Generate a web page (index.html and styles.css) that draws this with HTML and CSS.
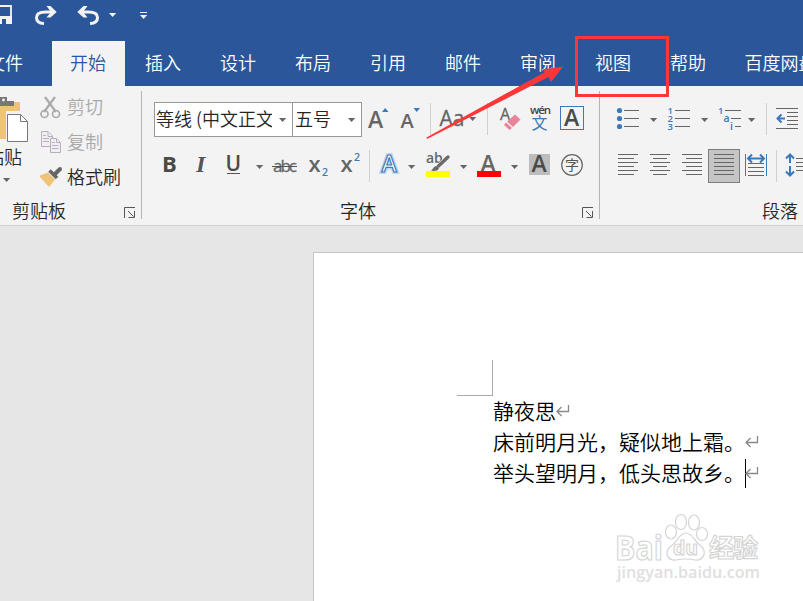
FILE: index.html
```
<!DOCTYPE html>
<html lang="zh-CN">
<head>
  <meta charset="UTF-8">
  <title>Word</title>
  <link rel="stylesheet" href="styles.css">
</head>
<body>
  <header class="titlebar">
    <svg class="w30" height="41" viewBox="0 0 30 41"><path d="M-6 6H11V17" fill="none" stroke="#f3f3f3" stroke-width="1.800"/><path d="M-6 16H12V24H6V19H2V24H-6Z" fill="#f3f3f3"/></svg>
    <svg class="w40" height="41" viewBox="0 0 40 41"><path d="M24 12H15.500C9 12 6.500 14.500 6.500 17.500C6.500 21 9 23.300 14 23.500" fill="none" stroke="#f3f3f3" stroke-width="3"/><path d="M16.500 6H20.500L26.700 12L20.500 17.500H16.500L21 12Z" fill="#f3f3f3"/></svg>
    <svg class="w35" height="41" viewBox="0 0 35 41"><path d="M10 12H18.500C25 12 27.500 14.500 27.500 17.500C27.500 21 25 23.300 20 23.500" fill="none" stroke="#f3f3f3" stroke-width="3"/><path d="M17.500 6H13.500L7.300 12L13.500 17.500H17.500L13 12Z" fill="#f3f3f3"/></svg>
    <svg class="w30" height="41" viewBox="0 0 30 41"><path d="M4 13H11.200L7.600 17Z" fill="#f3f3f3"/></svg>
    <svg class="w30" height="41" viewBox="0 0 30 41"><path d="M5 12H12V13H5ZM5 15H12.200L8.600 19Z" fill="#f3f3f3"/></svg>
  </header>

  <nav class="tabs">
    <span class="tab file">文件</span>
    <span class="tab active">开始</span>
    <span class="tab">插入</span>
    <span class="tab">设计</span>
    <span class="tab">布局</span>
    <span class="tab">引用</span>
    <span class="tab">邮件</span>
    <span class="tab">审阅</span>
    <span class="tab">视图</span>
    <span class="tab">帮助</span>
    <span class="tab last">百度网盘</span>
  </nav>

  <section class="ribbon">
    <div class="group clipboard">
      <div class="clip-body">
        <div class="paste">
          <svg width="36" height="54" viewBox="0 0 36 54">
            <path d="M0 11H20V20H6V48H0Z" fill="#eec37a"/>
            <path d="M0 6H7V10H14V15H0Z" fill="#777"/><circle cx="3.500" cy="9" r="1.400" fill="#f3f3f3"/>
            <path d="M7.500 23.500H20.500L27.500 30.500V50.500H7.500Z" fill="#fff" stroke="#777"/><path d="M20.500 23.500V30.500H27.500" fill="none" stroke="#777"/>
          </svg>
          <span class="paste-text">粘贴</span>
          <svg width="36" height="18" viewBox="0 0 36 18"><path class="arrow" d="M3 9H10.200L6.600 13Z"/></svg>
        </div>
        <div class="clip-list">
          <div class="clip-item off">
            <svg width="27" height="34" viewBox="0 0 27 34"><path d="M5 6L16 21M15 6L4 21" stroke="#aaa" stroke-width="2.200"/><circle cx="4.500" cy="23" r="3.500" fill="none" stroke="#aaa" stroke-width="1.700"/><circle cx="16" cy="23" r="3.500" fill="none" stroke="#aaa" stroke-width="1.700"/></svg>
            <span>剪切</span>
          </div>
          <div class="clip-item off">
            <svg width="27" height="34" viewBox="0 0 27 34"><g fill="#f3eef5" stroke="#b5b0b8"><path d="M1.500 5.500H8L12.500 10V20.500H1.500Z"/><path d="M10.500 12.500H16.500L20.500 16.500V26.500H10.500Z"/><path d="M8 5.500V10.500H12M16.500 12.500V16.500H20M3 9.500H6M3 12.500H9M3 15.500H9M12 16.500H15M12 19.500H18.500M12 22.500H18.500"/></g></svg>
            <span>复制</span>
          </div>
          <div class="clip-item">
            <svg width="27" height="34" viewBox="0 0 27 34"><path d="M-1 15L8 11.500L15 18.500L9 26Z" fill="#eec37a"/><path d="M9.500 9.500L17 17" stroke="#666" stroke-width="3.500"/><path d="M15 13L20 8" stroke="#666" stroke-width="4" stroke-linecap="round"/></svg>
            <span>格式刷</span>
          </div>
        </div>
      </div>
      <div class="group-label">剪贴板</div>
      <svg class="launcher" width="12" height="12" viewBox="0 0 12 12"><path d="M.5 11V.5H11M4 4L9.500 9.500M10.500 4V10.500H4.500" fill="none" stroke="#555"/></svg>
    </div>

    <div class="group font">
      <div class="row first">
        <div class="combo name"><span>等线 (中文正文)</span><svg width="20" height="33" viewBox="0 0 20 33"><path class="arrow" d="M7 15H14.200L10.600 19Z"/></svg></div>
        <div class="combo size"><span>五号</span><svg width="20" height="33" viewBox="0 0 20 33"><path class="arrow" d="M7 15H14.200L10.600 19Z"/></svg></div>
        <svg class="w32" height="35" viewBox="0 0 32 35"><text class="glyph" x="6" y="26" font-size="23">A</text><path d="M20 10H26.500L23.200 6Z" fill="#3d78b8"/></svg>
        <svg class="w32" height="35" viewBox="0 0 32 35"><text class="glyph" x="6.500" y="26" font-size="20">A</text><path d="M19.500 6H26L22.700 10Z" fill="#3d78b8"/></svg>
        <i class="sep s1"></i>
        <svg class="w50" height="35" viewBox="0 0 50 35"><text class="glyph thin" x="3.500" y="24" font-size="21" textLength="25">Aa</text><path class="arrow" d="M33 15H40.200L36.600 19Z"/></svg>
        <i class="sep s2"></i>
        <svg class="w32" height="35" viewBox="0 0 32 35"><text class="glyph thin" x="6" y="18" font-size="16">A</text><path d="M21 12.500L26.500 17.500L19 25L13 19.500Z" fill="#e8849a"/><path d="M12 20.500L18 26L15.500 28L10 23Z" fill="#e8849a"/></svg>
        <svg class="w32" height="35" viewBox="0 0 32 35"><text class="wen" x="5" y="11.500" font-size="11.500" textLength="21">wén</text><text class="cjk blue" x="6.500" y="26.500" font-size="16">文</text></svg>
        <svg class="w32" height="35" viewBox="0 0 32 35"><rect x="4.500" y="4.500" width="23" height="23" fill="none" stroke="#3d78b8"/><text class="glyph dark" x="8" y="24" font-size="23">A</text></svg>
      </div>
      <div class="row second">
        <svg class="w31" height="32" viewBox="0 0 31 32"><text class="glyph dark bold" x="8" y="22" font-size="22">B</text></svg>
        <svg class="w31" height="32" viewBox="0 0 31 32"><text class="serif" x="11" y="22" font-size="24">I</text></svg>
        <svg class="w33" height="32" viewBox="0 0 33 32"><text class="glyph dark" x="9.500" y="21" font-size="21">U</text><path d="M11 23.500H24" stroke="#555"/></svg>
        <svg class="w21" height="32" viewBox="0 0 21 32"><path class="arrow" d="M7 15H14.200L10.600 19Z"/></svg>
        <svg class="w30" height="32" viewBox="0 0 30 32"><text class="glyph thin" x="3" y="22" font-size="17" textLength="24">abc</text><path d="M2 16.500H27" stroke="#555"/></svg>
        <svg class="w34" height="32" viewBox="0 0 34 32"><text class="glyph" x="8.500" y="22" font-size="22">x</text><text class="small" x="22" y="25.500" font-size="10.500">2</text></svg>
        <svg class="w32" height="32" viewBox="0 0 32 32"><text class="glyph" x="6.500" y="22" font-size="22">x</text><text class="small" x="20" y="11" font-size="10.500">2</text></svg>
        <i class="sep s3"></i>
        <svg class="w31" height="32" viewBox="0 0 31 32"><text class="halo" x="7.500" y="22" font-size="23">A</text><text class="outline" x="7.500" y="22" font-size="23">A</text></svg>
        <svg class="w13" height="32" viewBox="0 0 13 32"><path class="arrow" d="M3 15H10.200L6.600 19Z"/></svg>
        <svg class="w38" height="32" viewBox="0 0 38 32"><text class="glyph ab" x="8" y="13" font-size="14">ab</text><path d="M8 21H32V27H8Z" fill="#ff0"/><path d="M19 18L29 8" stroke="#f3f3f3" stroke-width="5"/><path d="M20.500 16L30 7" stroke="#6a6a6a" stroke-width="3.400" stroke-linecap="round"/><path d="M12.500 20.500C15.500 20 15 16 18.500 16L21 18.500C20 21 16 21.500 12.500 20.500Z" fill="#6a6a6a"/></svg>
        <svg class="w14" height="32" viewBox="0 0 14 32"><path class="arrow" d="M4 15H11.200L7.600 19Z"/></svg>
        <svg class="w38" height="32" viewBox="0 0 38 32"><text class="glyph" x="10.500" y="21.500" font-size="23">A</text><path d="M7 21H31V27H7Z" fill="#f00"/></svg>
        <svg class="w13" height="32" viewBox="0 0 13 32"><path class="arrow" d="M3 15H10.200L6.600 19Z"/></svg>
        <svg class="w35" height="32" viewBox="0 0 35 32"><path d="M8 4H29V25H8Z" fill="#bdbdbd"/><text class="glyph dark" x="10.500" y="22" font-size="23">A</text></svg>
        <svg class="w32" height="32" viewBox="0 0 32 32"><circle cx="16" cy="15" r="10.300" fill="none" stroke="#666" stroke-width="1.200"/><text class="cjk" x="9" y="20" font-size="14">字</text></svg>
      </div>
      <div class="group-label">字体</div>
      <svg class="launcher" width="12" height="12" viewBox="0 0 12 12"><path d="M.5 11V.5H11M4 4L9.500 9.500M10.500 4V10.500H4.500" fill="none" stroke="#555"/></svg>
    </div>

    <div class="group para">
      <div class="row first">
        <svg class="w50" height="35" viewBox="0 0 50 35"><g fill="#3d78b8"><circle cx="9.500" cy="8.500" r="2.600"/><circle cx="9.500" cy="16.500" r="2.600"/><circle cx="9.500" cy="24.500" r="2.600"/></g><path class="line" d="M14 8.500H29M14 16.500H29M14 24.500H29"/><path class="arrow" d="M40 16H47.200L43.600 20Z"/></svg>
        <svg class="w50" height="35" viewBox="0 0 50 35"><g class="num"><text x="7.500" y="12">1</text><text x="7.500" y="20">2</text><text x="7.500" y="28">3</text></g><path class="line" d="M15 8.500H30M15 16.500H30M15 24.500H30"/><path class="arrow" d="M41 16H48.200L44.600 20Z"/></svg>
        <svg class="w56" height="35" viewBox="0 0 56 35"><g class="num"><text x="8" y="12">1</text><text x="13.500" y="19.500" class="letter">a</text><text x="20" y="28" class="letter">i</text></g><path class="line" d="M15 8.500H31M21 16.500H31M25 24.500H31"/><path class="arrow" d="M38 16H45.200L41.600 20Z"/></svg>
        <i class="sep s4"></i>
        <svg class="w32" height="35" viewBox="0 0 32 35"><path class="line" d="M4 6.500H26M15 10.500H26M15 14.500H26M15 18.500H26M15 22.500H26M4 26.500H26"/><path class="blue-line" d="M13 16.500H6M9.500 12.500L5.500 16.500L9.500 20.500"/></svg>
      </div>
      <div class="row second">
        <svg class="w32" height="34" viewBox="0 0 32 34"><path class="line" d="M8 5.500H28M8 9.500H24M8 13.500H28M8 17.500H24M8 21.500H28M8 25.500H24"/></svg>
        <svg class="w32" height="34" viewBox="0 0 32 34"><path class="line" d="M8 5.500H28M11 9.500H25M8 13.500H28M11 17.500H25M8 21.500H28M11 25.500H25"/></svg>
        <svg class="w34" height="34" viewBox="0 0 34 34"><path class="line" d="M8 5.500H28M12 9.500H28M8 13.500H28M12 17.500H28M8 21.500H28M12 25.500H28"/></svg>
        <div class="pressed"><svg width="30" height="32" viewBox="0 0 30 32"><path class="line" d="M5 4.500H25M5 8.500H25M5 12.500H25M5 16.500H25M5 20.500H25M5 24.500H25"/></svg></div>
        <svg class="w36" height="34" viewBox="0 0 36 34"><path d="M5.500 5V27M26.500 5V27" stroke="#3d78b8"/><path class="blue-line" d="M9 9.500H23M12 5.500L8 9.500L12 13.500M20 5.500L24 9.500L20 13.500"/><path class="line" d="M8 14.500H24M8 18.500H24M8 22.500H24M8 26.500H24"/></svg>
        <i class="sep s5"></i>
        <svg class="w32" height="34" viewBox="0 0 32 34"><path class="blue-line" d="M9 6V14M5 9.500L9 5.500L13 9.500M9 17V26M5 22.500L9 26.500L13 22.500"/><path class="line" d="M15 9.500H32M15 13.500H32M15 17.500H32M15 21.500H32"/></svg>
      </div>
      <div class="group-label">段落</div>
    </div>
  </section>

  <main class="workspace">
    <article class="page">
      <div class="corner"></div>
      <p>静夜思<svg class="mark" width="14" height="14" viewBox="0 0 14 14"><path d="M12.500 1V7.500H1.500M5.500 3L1 7.500L5.500 12"/></svg></p>
      <p>床前明月光，疑似地上霜。<svg class="mark" width="14" height="14" viewBox="0 0 14 14"><path d="M12.500 1V7.500H1.500M5.500 3L1 7.500L5.500 12"/></svg></p>
      <p>举头望明月，低头思故乡。<i class="caret"></i><svg class="mark" width="14" height="14" viewBox="0 0 14 14"><path d="M12.500 1V7.500H1.500M5.500 3L1 7.500L5.500 12"/></svg></p>
    </article>
  </main>

  <svg class="watermark" width="160" height="80" viewBox="0 0 160 80">
    <text class="wm-logo" x="3" y="49.500" font-size="34" textLength="48" lengthAdjust="spacingAndGlyphs">Bai</text>
    <g class="wm-paw"><ellipse cx="59" cy="22" rx="5.500" ry="7"/><ellipse cx="69" cy="12" rx="5.500" ry="7.500"/><ellipse cx="82" cy="12.500" rx="5.500" ry="7.500"/><ellipse cx="90" cy="24" rx="5.500" ry="6.500"/><path d="M74 23C67 23 66 32 58 37C52 43 56 51 64 50Q74 48 83 50C91 51 95 43 90 37C82 32 81 23 74 23Z"/></g>
    <text class="wm-logo" x="61" y="45" font-size="20" textLength="25" lengthAdjust="spacingAndGlyphs">du</text>
    <text class="wm-cn" x="97" y="47" font-size="25" textLength="49">经验</text>
    <text class="wm-url" x="5" y="68" font-size="16" textLength="143" lengthAdjust="spacingAndGlyphs">jingyan.baidu.com</text>
  </svg>

  <!-- red box and arrow pointing at the view tab -->
  <svg class="callout" width="260" height="120" viewBox="0 0 260 120">
    <rect x="156.500" y="7.500" width="91" height="58" fill="none" stroke="#fd3638" stroke-width="3"/>
    <path d="M6.500 107.500L125 42L122.500 39.200L143 36.700L131 52L128.500 47L7 109Z" fill="#fd3638"/>
  </svg>
</body>
</html>
```
FILE: styles.css
```
* {
  box-sizing: border-box;
}

body {
  margin: 0;
  width: 803px;
  height: 601px;
  overflow: hidden;
  display: flex;
  flex-direction: column;
  position: relative;
  background: #e6e6e6;
  color: #262626;
  font: 350 18px/24px "Noto Sans CJK SC", sans-serif;
}

svg {
  display: block;
  flex: none;
}

/* title bar */
.titlebar {
  display: flex;
  height: 41px;
  background: #2b579a;
}

.w13 { width: 13px; }
.w14 { width: 14px; }
.w21 { width: 21px; }
.w30 { width: 30px; }
.w31 { width: 31px; }
.w32 { width: 32px; }
.w33 { width: 33px; }
.w34 { width: 34px; }
.w35 { width: 35px; }
.w36 { width: 36px; }
.w38 { width: 38px; }
.w40 { width: 40px; }
.w50 { width: 50px; }
.w56 { width: 56px; }

/* tabs */
.tabs {
  display: flex;
  height: 45px;
  background: #2b579a;
  color: #fff;
  overflow: hidden;
}

.tab {
  flex: none;
  width: 73px;
  margin: 0 1px;
  padding-right: 1px;
  line-height: 42px;
  text-align: center;
}

.tab.file {
  margin: 0 9px 0 -31px;
}

.tab.active {
  background: #f3f3f3;
  color: #2b579a;
}

.tab.last {
  width: 108px;
}

/* ribbon */
.ribbon {
  display: flex;
  height: 140px;
  padding: 5px 0 6px;
  background: #f3f3f3;
  border-bottom: 1px solid #d2d2d2;
  overflow: hidden;
}

.group {
  position: relative;
  flex: none;
  height: 128px;
  border-right: 1px solid #b4b4b4;
}

.clipboard { width: 142px; }
.font { width: 458px; padding-left: 12px; }
.para { width: 240px; padding-left: 10px; border: none; }

.clip-body {
  display: flex;
  height: 108px;
}

.paste {
  width: 40px;
}

.paste-text {
  display: block;
  height: 24px;
  margin-left: -14px;
  line-height: 23px;
  white-space: nowrap;
}

.clip-item {
  display: flex;
  height: 35px;
  line-height: 31px;
}

.off {
  color: #a9a9a9;
}

.group-label {
  line-height: 23px;
  text-align: center;
}

.clipboard .group-label {
  padding-right: 63px;
}

.font .group-label {
  padding-right: 37px;
}

.para .group-label {
  padding-left: 130px;
  padding-right: 20px;
}

.launcher {
  position: absolute;
  right: 5px;
  bottom: 0;
}

.row {
  display: flex;
}

.row.first {
  height: 46px;
  margin-top: 11px;
}

.row.second {
  height: 51px;
  padding-top: 2px;
}

.para .row.second {
  padding-top: 1px;
}

.combo {
  display: flex;
  height: 35px;
  border: 1px solid #999;
  background: #fff;
  line-height: 31px;
}

.combo span {
  flex: 1;
  padding-left: 1px;
  overflow: hidden;
  white-space: nowrap;
}

.name { width: 139px; }
.size { width: 70px; margin-left: -1px; }
.size span { padding-left: 2px; }

.sep {
  flex: none;
  width: 1px;
  height: 32px;
  margin-top: 1px;
  background: #cfcfcf;
}

.s1 { margin-left: 4px; margin-right: 5px; }
.s2 { margin-left: 1px; margin-right: 6px; }
.s3 { margin: 0 4px 0 3px; }
.s4 { margin-right: 5px; }
.s5 { margin-right: 4px; }

.font .s2 ~ svg { margin-right: -1px; }

.arrow { fill: #666; }
.line { stroke: #666; fill: none; }
.blue-line { stroke: #3d78b8; stroke-width: 2; fill: none; }

.glyph {
  font-family: "Open Sans", sans-serif;
  font-weight: 600;
  fill: #666;
}

.glyph.dark { fill: #4a4a4a; }
.glyph.bold { font-weight: 700; }
.glyph.thin { font-weight: 400; stroke: #666; stroke-width: .3px; }
.glyph.ab { font-weight: 600; }

.wen {
  font-family: "Open Sans", sans-serif;
  font-weight: 600;
  fill: #444;
}

.serif {
  font-family: "Liberation Serif", serif;
  font-style: italic;
  font-weight: 700;
  fill: #555;
}

.small {
  font-family: "Open Sans", sans-serif;
  font-weight: 600;
  fill: #3d78b8;
}

.cjk {
  font-weight: 400;
  fill: #555;
}

.cjk.blue {
  fill: #3d78b8;
}

.num {
  font: 600 9.5px "Open Sans", sans-serif;
  fill: #3d78b8;
}

.letter {
  font-size: 10.5px;
}

.halo,
.outline {
  font-family: "Open Sans", sans-serif;
  font-weight: 600;
  fill: #fff;
  stroke: #bcd8f3;
  stroke-width: 4px;
}

.outline {
  stroke: #3d78b8;
  stroke-width: 1.2px;
}

.pressed {
  width: 32px;
  height: 34px;
  border: 1px solid #7d7d7d;
  background: #c5c5c5;
}

/* document */
.workspace {
  flex: 1;
  padding: 26px 0 0 313px;
}

.page {
  height: 349px;
  padding: 107px 0 0 143px;
  border: 1px solid #c6c6c6;
  border-width: 1px 0 0 1px;
  background: #fff;
  color: #000;
}

.corner {
  width: 36px;
  height: 36px;
  border: 1px solid #aaa;
  border-width: 0 1px 1px 0;
}

.page p {
  display: flex;
  align-items: center;
  height: 31px;
  padding-bottom: 2px;
  margin: 0 0 0 36px;
  font-size: 21px;
  line-height: 29px;
}

.mark {
  fill: none;
  stroke: #888;
  stroke-width: 1.3px;
}

.caret {
  width: 1px;
  height: 29px;
  margin: 2px -1px 0 0;
  background: #000;
}

/* overlays */
.watermark {
  position: absolute;
  left: 612px;
  top: 510px;
}

.wm-logo,
.wm-cn,
.wm-paw,
.wm-url {
  fill: #fff;
  stroke: #d4d4d4;
  stroke-width: 1.2px;
}

.wm-logo {
  font-family: "Open Sans", sans-serif;
  font-weight: 700;
}

.wm-cn {
  font-weight: 700;
}

.wm-url {
  font-family: "Open Sans", sans-serif;
  font-weight: 600;
  fill: #e0e0e0;
  stroke: none;
}

.callout {
  position: absolute;
  left: 420px;
  top: 30px;
}
```
